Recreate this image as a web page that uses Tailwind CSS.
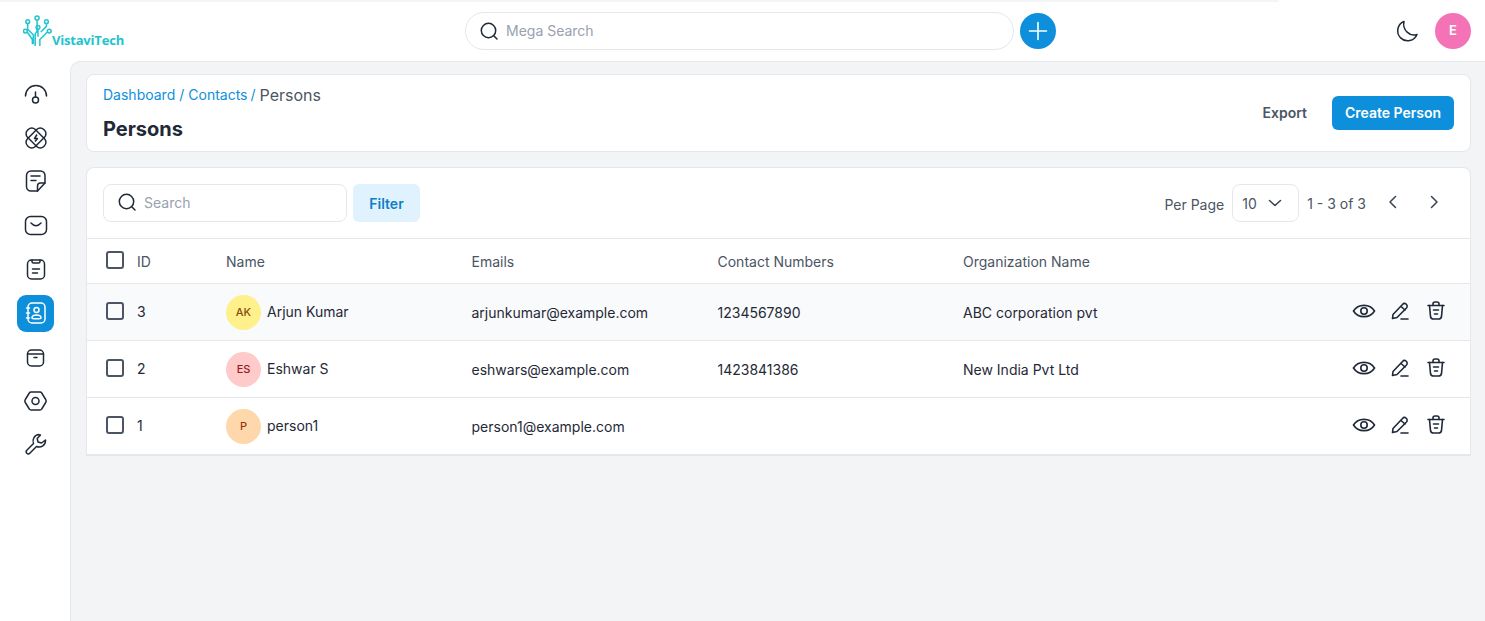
<!DOCTYPE html>
<html lang="en">
<head>
  <meta charset="UTF-8">
  <title>Persons</title>
  <script src="https://cdn.jsdelivr.net/npm/@tailwindcss/browser@4"></script>
</head>
<body class="h-[621px] overflow-hidden bg-white font-['Inter',sans-serif] text-[#1f2937]">
  <div class="h-[2px] w-[1279px] bg-[#f5f5f5]"></div>

  <!-- top bar -->
  <header class="flex h-[59px] items-center pb-[2px]">
    <div class="flex w-[465px] items-center pl-[23px]">
      <svg class="mt-[3px] h-[38px] w-[30px] text-[#22c3cf]" viewBox="0 0 32 38" fill="none" stroke="currentColor" stroke-width="1.6">
        <circle cx="15" cy="4" r="2.2"/><circle cx="5" cy="8" r="2"/><circle cx="25" cy="8" r="2"/><circle cx="2.5" cy="18" r="2"/><circle cx="28" cy="18" r="2"/><circle cx="16" cy="14" r="2"/>
        <path d="M15 6.500V18L13 21V34M5 10V16L11 22V32M25 10V13L19 19M16 16V24M4.500 19L10 27V32M26 19L18 27V34"/>
      </svg>
      <span class="mt-[21px] -ml-[1px] font-['Open_Sans',sans-serif] text-[13px] font-bold tracking-[-0.2px] text-[#22c3cf]">VistaviTech</span>
    </div>
    <div class="flex h-[38px] w-[549px] items-center gap-[7px] rounded-full border border-gray-200 pl-[13px]">
      <svg class="h-[20px] w-[20px]" viewBox="0 0 20 20" fill="none" stroke="#1f2937" stroke-width="1.500" stroke-linecap="round"><circle cx="9.500" cy="9.500" r="7.200"/><path d="M15 15l3 3"/></svg>
      <span class="text-[14px] text-gray-400">Mega Search</span>
    </div>
    <button class="ml-[6px] flex h-[36px] w-[36px] items-center justify-center rounded-full bg-[#0e8fdc]">
      <svg class="h-[20px] w-[20px]" viewBox="0 0 20 20" fill="none" stroke="white" stroke-width="1.600" stroke-linecap="round"><path d="M10 1.500v17M1.500 10h17"/></svg>
    </button>
    <div class="ml-auto flex items-center gap-[16px] pr-[14px]">
      <svg class="h-[24px] w-[24px]" viewBox="0 0 24 24" fill="none" stroke="#1f2937" stroke-width="1.500" stroke-linejoin="round"><path d="M9 2.500A10 10 0 1 0 22 15.500C15 18 7 11 9 2.500Z"/></svg>
      <div class="flex h-[36px] w-[36px] items-center justify-center rounded-full bg-[#f472b6] text-[13px] font-semibold text-white">E</div>
    </div>
  </header>

  <div class="flex h-[560px]">
    <!-- sidebar -->
    <nav class="flex w-[70px] flex-col items-center pt-[15px] pl-[1px] text-[#1f2937]">
      <a class="flex h-[37px] w-[37px] items-center justify-center">
        <svg class="h-[24px] w-[24px]" viewBox="0 0 24 24" fill="none" stroke="currentColor" stroke-width="1.500" stroke-linecap="round"><path d="M1.500 13a10.500 10.500 0 0 1 21 0"/><path d="M11.500 9v5"/><circle cx="11.500" cy="17" r="3"/></svg>
      </a>
      <a class="mt-[6.75px] flex h-[37px] w-[37px] items-center justify-center">
        <svg class="h-[24px] w-[24px]" viewBox="0 0 24 24" fill="none" stroke="currentColor" stroke-width="1.500" stroke-linejoin="round"><rect x="0.500" y="6.500" width="23" height="11" rx="5" transform="rotate(45 12 12)"/><rect x="0.500" y="6.500" width="23" height="11" rx="5" transform="rotate(-45 12 12)"/><path d="M13 8.500 10.500 12.500h3L11 15.500"/></svg>
      </a>
      <a class="mt-[6.75px] flex h-[37px] w-[37px] items-center justify-center">
        <svg class="h-[24px] w-[24px]" viewBox="0 0 24 24" fill="none" stroke="currentColor" stroke-width="1.500" stroke-linecap="round" stroke-linejoin="round"><path d="M21 13V5.500A4.500 4.500 0 0 0 16.500 1H7a4.500 4.500 0 0 0-4.500 4.500V16.500A4.500 4.500 0 0 0 7 21h6.500Z"/><path d="M21 13h-4.500a3 3 0 0 0-3 3v5"/><path d="M7 6h9M7 10.500h5"/></svg>
      </a>
      <a class="mt-[6.75px] flex h-[37px] w-[37px] items-center justify-center">
        <svg class="h-[24px] w-[24px]" viewBox="0 0 24 24" fill="none" stroke="currentColor" stroke-width="1.500" stroke-linecap="round"><rect x="1.500" y="2.500" width="21" height="18" rx="5"/><path d="M7 9c3 3.500 7 3.500 10 0"/></svg>
      </a>
      <a class="mt-[6.75px] flex h-[37px] w-[37px] items-center justify-center">
        <svg class="h-[24px] w-[24px]" viewBox="0 0 24 24" fill="none" stroke="currentColor" stroke-width="1.500" stroke-linecap="round"><rect x="3.500" y="2" width="17" height="19" rx="4"/><path d="M8 2v1.500a1.500 1.500 0 0 0 1.500 1.500h5A1.500 1.500 0 0 0 16 3.500V2"/><path d="M8.500 11h7M8.500 15h5"/></svg>
      </a>
      <a class="mt-[6.75px] flex h-[37px] w-[37px] items-center justify-center rounded-[9px] bg-[#0e8fdc] text-white">
        <svg class="h-[24px] w-[24px]" viewBox="0 0 24 24" fill="none" stroke="currentColor" stroke-width="1.500" stroke-linecap="round"><rect x="4" y="2" width="17" height="20" rx="4"/><circle cx="12.500" cy="9" r="2.500"/><path d="M8 17c0-4 9-4 9 0 0 1-9 1-9 0Z"/><path d="M2.500 7h3M2.500 12h3M2.500 17h3"/></svg>
      </a>
      <a class="mt-[6.75px] flex h-[37px] w-[37px] items-center justify-center">
        <svg class="h-[24px] w-[24px]" viewBox="0 0 24 24" fill="none" stroke="currentColor" stroke-width="1.500" stroke-linecap="round"><rect x="3.500" y="5" width="16" height="16" rx="4"/><path d="M3.500 9h16"/><path d="M10 12.500h3"/></svg>
      </a>
      <a class="mt-[6.75px] flex h-[37px] w-[37px] items-center justify-center">
        <svg class="h-[24px] w-[24px]" viewBox="0 0 24 24" fill="none" stroke="currentColor" stroke-width="1.500" stroke-linejoin="round"><path d="M7 3h9a2 2 0 0 1 1.700 1l4 6.500a3 3 0 0 1 0 3l-4 6.500a2 2 0 0 1-1.700 1H7a2 2 0 0 1-1.700-1l-4-6.500a3 3 0 0 1 0-3l4-6.500A2 2 0 0 1 7 3Z"/><circle cx="11.500" cy="12" r="3.500"/></svg>
      </a>
      <a class="mt-[6.75px] flex h-[37px] w-[37px] items-center justify-center">
        <svg class="h-[24px] w-[24px]" viewBox="0 0 24 24" fill="none" stroke="currentColor" stroke-width="1.500" stroke-linejoin="round"><path d="M15 1.500a6.500 6.500 0 0 0-5.500 9L2.800 17.200a2.200 2.200 0 0 0 0 3c.9.900 2.200.900 3 0l6.700-6.700a6.500 6.500 0 0 0 9-6.500l-4 3-3.500-1-.8-3.500 3.300-3.500a6 6 0 0 0-1.500 0Z"/></svg>
      </a>
    </nav>

    <!-- content -->
    <main class="flex-1 rounded-tl-[10px] border-t border-l border-gray-200 bg-[#f3f4f6] pt-[12px] pr-[14px] pl-[15px]">
      <section class="flex h-[78px] items-center justify-between rounded-lg border border-gray-200 bg-white pr-[16px] pl-[16px]">
        <div class="mt-[2px]">
          <div class="flex items-center text-[14px] leading-[20px] text-[#0e8fdc]">
            <span>Dashboard</span><span class="ml-[4px]">/</span><span class="ml-[4px]">Contacts</span><span class="ml-[3px]">/</span>
            <span class="ml-[4px] text-[16px] text-[#4b5563]">Persons</span>
          </div>
          <h1 class="mt-[10px] text-[20px] leading-[28px] font-bold text-[#1f2937]">Persons</h1>
        </div>
        <div class="flex items-center gap-[25px]">
          <span class="pb-[2px] text-[14px] font-semibold text-[#4b5563]">Export</span>
          <button class="h-[34px] w-[122px] rounded-md bg-[#0e8fdc] pb-[2px] text-[14px] font-semibold text-white">Create Person</button>
        </div>
      </section>

      <section class="mt-[15px] h-[289px] rounded-t-lg border border-b-2 border-gray-200 bg-white">
        <!-- toolbar -->
        <div class="flex h-[70px] items-center pr-[31px] pl-[16px]">
          <div class="flex h-[38px] w-[244px] items-center gap-[7px] rounded-lg border border-gray-200 pb-[2px] pl-[13px]">
            <svg class="h-[20px] w-[20px]" viewBox="0 0 20 20" fill="none" stroke="#1f2937" stroke-width="1.500" stroke-linecap="round"><circle cx="9.500" cy="9.500" r="7.200"/><path d="M15 15l3 3"/></svg>
            <span class="text-[14px] text-gray-400">Search</span>
          </div>
          <button class="ml-[6px] h-[38px] w-[67px] rounded-md bg-[#e0f2fe] text-[14px] font-semibold text-[#0e7fc4]">Filter</button>
          <div class="ml-auto flex items-center">
            <span class="mt-[2px] text-[14px] text-[#4b5563]">Per Page</span>
            <div class="ml-[8px] flex h-[38px] w-[67px] items-center justify-between rounded-lg border border-gray-200 pr-[16px] pl-[9px] text-[14px] text-[#4b5563]">
              <span>10</span>
              <svg class="h-[12px] w-[14px]" viewBox="0 0 14 12" fill="none" stroke="#374151" stroke-width="1.500" stroke-linecap="round" stroke-linejoin="round"><path d="M1.500 3.500 7 8.500l5.500-5"/></svg>
            </div>
            <span class="ml-[8px] text-[14px] text-[#4b5563]">1 - 3 of 3</span>
            <svg class="mb-[2px] ml-[22px] h-[14px] w-[9px]" viewBox="0 0 9 14" fill="none" stroke="#374151" stroke-width="1.500" stroke-linecap="round" stroke-linejoin="round"><path d="M7.500 1.500 2 7l5.500 5.500"/></svg>
            <svg class="mb-[2px] ml-[33px] h-[14px] w-[9px]" viewBox="0 0 9 14" fill="none" stroke="#374151" stroke-width="1.500" stroke-linecap="round" stroke-linejoin="round"><path d="M1.500 1.500 7 7l-5.500 5.500"/></svg>
          </div>
        </div>

        <!-- table head -->
        <div class="grid h-[46px] grid-cols-[139px_245.5px_245.5px_246px_1fr] items-center border-y border-gray-200 text-[14px] text-[#4b5563]">
          <div class="flex items-center pl-[19px]">
            <span class="-mt-[2px] h-[18px] w-[18px] rounded-[3px] border-2 border-[#4b5563]"></span>
            <span class="ml-[13px]">ID</span>
          </div>
          <div>Name</div><div>Emails</div><div class="pl-[0.5px]">Contact Numbers</div><div>Organization Name</div>
        </div>

        <!-- rows -->
        <div class="grid h-[57px] grid-cols-[139px_245.5px_245.5px_246px_1fr_auto] items-center border-b border-gray-200 bg-[#f9fafb] text-[14px]">
          <div class="flex items-center pb-[2px] pl-[19px]">
            <span class="h-[18px] w-[18px] rounded-[3px] border-2 border-[#4b5563]"></span>
            <span class="ml-[13px]">3</span>
          </div>
          <div class="flex items-center gap-[6px]">
            <span class="flex h-[35px] w-[35px] items-center justify-center rounded-full bg-[#fef08a] text-[11px] font-medium text-[#854d0e]">AK</span>
            <span class="pb-[2px]">Arjun Kumar</span>
          </div>
          <div>arjunkumar@example.com</div>
          <div class="pl-[0.5px]">1234567890</div>
          <div>ABC corporation pvt</div>
          <div class="flex items-center gap-[12px] pr-[22px] pb-[2px]">
            <svg class="h-[24px] w-[24px]" viewBox="0 0 24 24" fill="none" stroke="#1f2937" stroke-width="1.600"><path d="M1.500 12C6 4.500 18 4.500 22.500 12 18 19.500 6 19.500 1.500 12Z"/><circle cx="12" cy="12" r="3.200"/></svg>
            <svg class="h-[24px] w-[24px]" viewBox="0 0 24 24" fill="none" stroke="#1f2937" stroke-width="1.600" stroke-linecap="round" stroke-linejoin="round"><path d="M4.500 19.500 5 15.500 14.500 5.500a2.600 2.600 0 0 1 4 3.500L9 18.500Z"/><path d="M13 7.500l4 3.500"/><path d="M13 20h7"/></svg>
            <svg class="h-[24px] w-[24px]" viewBox="0 0 24 24" fill="none" stroke="#1f2937" stroke-width="1.600" stroke-linecap="round"><path d="M4 6.500h16"/><path d="M9 6.500V5a2 2 0 0 1 2-2h2a2 2 0 0 1 2 2v1.500"/><path d="M5.500 6.500l1 11a3 3 0 0 0 3 2.500h5a3 3 0 0 0 3-2.500l1-11"/><path d="M9.500 11h5M10.500 15h3"/></svg>
          </div>
        </div>
        <div class="grid h-[57px] grid-cols-[139px_245.5px_245.5px_246px_1fr_auto] items-center border-b border-gray-200 text-[14px]">
          <div class="flex items-center pb-[2px] pl-[19px]">
            <span class="h-[18px] w-[18px] rounded-[3px] border-2 border-[#4b5563]"></span>
            <span class="ml-[13px]">2</span>
          </div>
          <div class="flex items-center gap-[6px]">
            <span class="flex h-[35px] w-[35px] items-center justify-center rounded-full bg-[#fecaca] text-[11px] font-medium text-[#991b1b]">ES</span>
            <span class="pb-[2px]">Eshwar S</span>
          </div>
          <div>eshwars@example.com</div>
          <div class="pl-[0.5px]">1423841386</div>
          <div>New India Pvt Ltd</div>
          <div class="flex items-center gap-[12px] pr-[22px] pb-[2px]">
            <svg class="h-[24px] w-[24px]" viewBox="0 0 24 24" fill="none" stroke="#1f2937" stroke-width="1.600"><path d="M1.500 12C6 4.500 18 4.500 22.500 12 18 19.500 6 19.500 1.500 12Z"/><circle cx="12" cy="12" r="3.200"/></svg>
            <svg class="h-[24px] w-[24px]" viewBox="0 0 24 24" fill="none" stroke="#1f2937" stroke-width="1.600" stroke-linecap="round" stroke-linejoin="round"><path d="M4.500 19.500 5 15.500 14.500 5.500a2.600 2.600 0 0 1 4 3.500L9 18.500Z"/><path d="M13 7.500l4 3.500"/><path d="M13 20h7"/></svg>
            <svg class="h-[24px] w-[24px]" viewBox="0 0 24 24" fill="none" stroke="#1f2937" stroke-width="1.600" stroke-linecap="round"><path d="M4 6.500h16"/><path d="M9 6.500V5a2 2 0 0 1 2-2h2a2 2 0 0 1 2 2v1.500"/><path d="M5.500 6.500l1 11a3 3 0 0 0 3 2.500h5a3 3 0 0 0 3-2.500l1-11"/><path d="M9.500 11h5M10.500 15h3"/></svg>
          </div>
        </div>
        <div class="grid h-[56px] grid-cols-[139px_245.5px_245.5px_246px_1fr_auto] items-center text-[14px]">
          <div class="flex items-center pb-[2px] pl-[19px]">
            <span class="h-[18px] w-[18px] rounded-[3px] border-2 border-[#4b5563]"></span>
            <span class="ml-[13px]">1</span>
          </div>
          <div class="flex items-center gap-[6px]">
            <span class="flex h-[35px] w-[35px] items-center justify-center rounded-full bg-[#fed7aa] text-[11px] font-medium text-[#9a3412]">P</span>
            <span class="pb-[2px]">person1</span>
          </div>
          <div>person1@example.com</div>
          <div></div>
          <div></div>
          <div class="flex items-center gap-[12px] pr-[22px] pb-[2px]">
            <svg class="h-[24px] w-[24px]" viewBox="0 0 24 24" fill="none" stroke="#1f2937" stroke-width="1.600"><path d="M1.500 12C6 4.500 18 4.500 22.500 12 18 19.500 6 19.500 1.500 12Z"/><circle cx="12" cy="12" r="3.200"/></svg>
            <svg class="h-[24px] w-[24px]" viewBox="0 0 24 24" fill="none" stroke="#1f2937" stroke-width="1.600" stroke-linecap="round" stroke-linejoin="round"><path d="M4.500 19.500 5 15.500 14.500 5.500a2.600 2.600 0 0 1 4 3.500L9 18.500Z"/><path d="M13 7.500l4 3.500"/><path d="M13 20h7"/></svg>
            <svg class="h-[24px] w-[24px]" viewBox="0 0 24 24" fill="none" stroke="#1f2937" stroke-width="1.600" stroke-linecap="round"><path d="M4 6.500h16"/><path d="M9 6.500V5a2 2 0 0 1 2-2h2a2 2 0 0 1 2 2v1.500"/><path d="M5.500 6.500l1 11a3 3 0 0 0 3 2.500h5a3 3 0 0 0 3-2.500l1-11"/><path d="M9.500 11h5M10.500 15h3"/></svg>
          </div>
        </div>
      </section>
    </main>
  </div>
</body>
</html>
